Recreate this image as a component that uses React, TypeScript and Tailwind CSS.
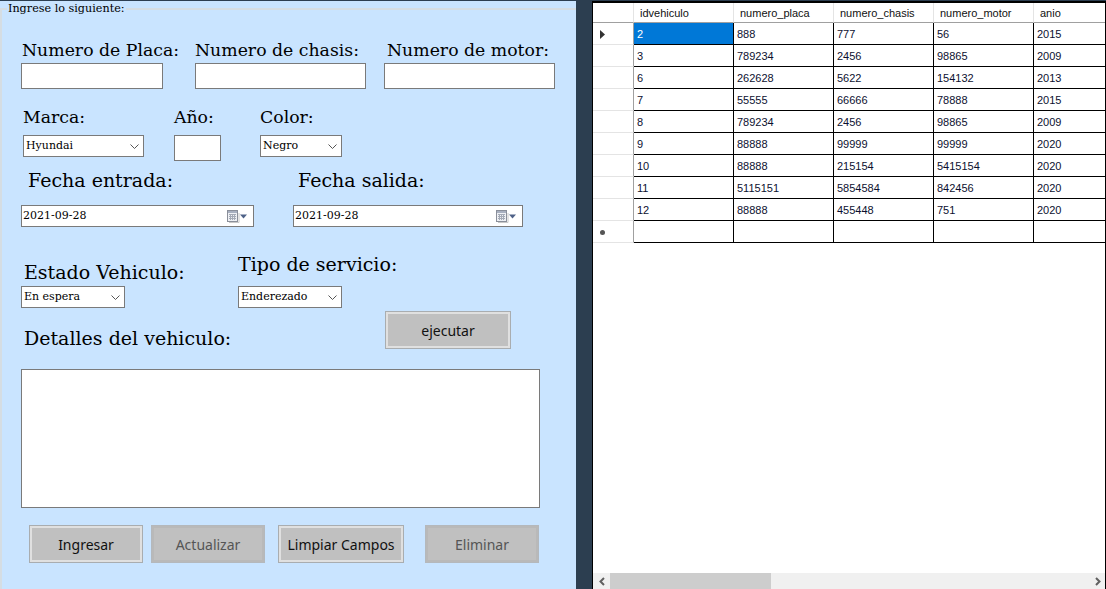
import React from "react";

const slab = "font-['DejaVu_Serif',serif]";

const rows = [
  ["2", "888", "777", "56", "2015"],
  ["3", "789234", "2456", "98865", "2009"],
  ["6", "262628", "5622", "154132", "2013"],
  ["7", "55555", "66666", "78888", "2015"],
  ["8", "789234", "2456", "98865", "2009"],
  ["9", "88888", "99999", "99999", "2020"],
  ["10", "88888", "215154", "5415154", "2020"],
  ["11", "5115151", "5854584", "842456", "2020"],
  ["12", "88888", "455448", "751", "2020"],
  ["", "", "", "", ""],
];

const headers = ["idvehiculo", "numero_placa", "numero_chasis", "numero_motor", "anio"];

const Label = ({ text, big = false, className = "" }: { text: string; big?: boolean; className?: string }) => (
  <div className={`h-5 whitespace-nowrap leading-5 text-black ${big ? "text-[19px]" : "text-[17.300px]"} ${slab} ${className}`}>{text}</div>
);

const Select = ({ value, className = "" }: { value: string; className?: string }) => (
  <div className={`flex h-[22px] items-center justify-between border border-[#7a7a7a] bg-white pl-[2px] pr-[4px] text-[11px] text-black ${slab} ${className}`}>
    <span>{value}</span>
    <svg width="9" height="5" viewBox="0 0 9 5" fill="none" stroke="#555" strokeWidth="1">
      <path d="M0.500 0.500 L4.500 4.500 L8.500 0.500" />
    </svg>
  </div>
);

const DatePicker = ({ className = "" }: { className?: string }) => (
  <div className={`flex h-[22px] items-center justify-between border border-[#7a7a7a] bg-white pl-[1px] pr-[6px] text-[11px] text-black ${slab} ${className}`}>
    <span>2021-09-28</span>
    <svg width="20" height="13" viewBox="0 0 20 13">
      <rect x="0.5" y="0.5" width="10" height="11" fill="#eef0f4" stroke="#8a8f9a" />
      <rect x="1" y="1" width="9" height="2" fill="#a8b0c0" />
      <path d="M2 4.5h7M2 6.5h7M2 8.5h7M3.5 4v6M5.5 4v6M7.5 4v6" stroke="#a4aab6" strokeWidth="1" />
      <path d="M2 12.5h10V3" fill="none" stroke="#c8c8c8" />
      <path d="M13 4.5h7l-3.500 4z" fill="#4f6288" />
    </svg>
  </div>
);

const ActionButton = ({ text, disabled = false, className = "" }: { text: string; disabled?: boolean; className?: string }) => (
  <button
    className={`h-[38px] border bg-[#c0c0c0] font-['Noto_Sans',sans-serif] text-[14px] outline-2 -outline-offset-3 ${
      disabled
        ? "border-[#b4b8bc] text-[#555] outline-[#b9b9b9]"
        : "border-[#a9adb0] text-[#111] outline-[#e0e0e0]"
    } ${className}`}
  >
    {text}
  </button>
);

export default function App() {
  return (
    <div className="flex h-[589px] w-[1106px] overflow-hidden bg-[#2c3e50] pt-px">
      {/* formulario */}
      <div className="h-full w-[576px] bg-[#c9e4ff]">
        <fieldset className="h-full border-l-2 border-t-2 border-[#d5dde3]">
          <legend className={`ml-[5px] px-[1px] text-[11.200px] leading-[15px] text-black ${slab}`}>Ingrese lo siguiente:</legend>

          <div className="pl-[19px]">
            <div className="mt-[24px] flex">
              <div className="w-[142px]">
                <Label text="Numero de Placa:" className="ml-px" />
                <input className="mt-[3px] block h-[26px] w-full border border-[#7a7a7a] bg-white" />
              </div>
              <div className="ml-[32px] w-[171px]">
                <Label text="Numero de chasis:" />
                <input className="mt-[3px] block h-[26px] w-full border border-[#7a7a7a] bg-white" />
              </div>
              <div className="ml-[18px] w-[171px]">
                <Label text="Numero de motor:" className="ml-[3px]" />
                <input className="mt-[3px] block h-[26px] w-full border border-[#7a7a7a] bg-white" />
              </div>
            </div>

            <div className="mt-[18px] flex">
              <div className="ml-[2px] w-[121px]">
                <Label text="Marca:" />
                <Select value="Hyundai" className="mt-[8px]" />
              </div>
              <div className="ml-[30px] w-[47px]">
                <Label text="Año:" />
                <input className="mt-[8px] block h-[26px] w-full border border-[#7a7a7a] bg-white" />
              </div>
              <div className="ml-[39px] w-[82px]">
                <Label text="Color:" />
                <Select value="Negro" className="mt-[8px]" />
              </div>
            </div>

            <div className="mt-[9px] flex">
              <div className="w-[233px]">
                <Label big text="Fecha entrada:" className="ml-[7px]" />
                <DatePicker className="mt-[15px]" />
              </div>
              <div className="ml-[39px] w-[230px]">
                <Label big text="Fecha salida:" className="ml-[5px]" />
                <DatePicker className="mt-[15px]" />
              </div>
            </div>

            <div className="mt-[27px] flex items-end">
              <div className="w-[104px]">
                <Label big text="Estado Vehiculo:" className="ml-[3px]" />
                <Select value="En espera" className="mt-[4px]" />
              </div>
              <div className="ml-[113px] w-[104px]">
                <Label big text="Tipo de servicio:" />
                <Select value="Enderezado" className="mt-[12px]" />
              </div>
            </div>

            <div className="mt-[3px] flex w-[490px] items-end justify-between">
              <Label big text="Detalles del vehiculo:" className="mb-px ml-[3px]" />
              <ActionButton text="ejecutar" className="w-[126px]" />
            </div>

            <textarea className="mt-[20px] block h-[139px] w-[519px] resize-none border border-[#7a7a7a] bg-white" />

            <div className="mt-[17px] ml-[8px] flex">
              <ActionButton text="Ingresar" className="w-[114px]" />
              <ActionButton text="Actualizar" disabled className="ml-[8px] w-[114px]" />
              <ActionButton text="Limpiar Campos" className="ml-[13px] w-[126px]" />
              <ActionButton text="Eliminar" disabled className="ml-[21px] w-[114px]" />
            </div>
          </div>
        </fieldset>
      </div>

      {/* tabla */}
      <div className="ml-[16px] flex h-full w-[514px] flex-col border-x border-t-2 border-black bg-white font-['Liberation_Sans',sans-serif] text-[11px]">
        <div className="min-h-0 flex-1 overflow-hidden">
          <div className="grid w-[541px] grid-cols-[41px_100px_100px_100px_100px_100px]">
            <div className="h-[20px] border-r border-b border-r-[#e4e4e4] border-b-[#a0a0a0]" />
            {headers.map((h) => (
              <div key={h} className="flex h-[20px] items-center border-r border-b border-r-[#e4e4e4] border-b-[#a0a0a0] pl-[6px] pt-px text-[#111]">
                {h}
              </div>
            ))}
            {rows.map((row, i) => (
              <React.Fragment key={i}>
                <div className="flex h-[22px] items-center border-r border-b border-r-[#a0a0a0] border-b-[#e4e4e4] pl-[6px] pt-px">
                  {i === 0 && (
                    <svg width="7" height="9" viewBox="0 0 7 9">
                      <path d="M1 0 L6 4.500 L1 9z" fill="#333" />
                    </svg>
                  )}
                  {i === rows.length - 1 && <span className="ml-[1px] block h-[5px] w-[5px] rounded-full bg-[#555]" />}
                </div>
                {row.map((cell, j) => (
                  <div
                    key={j}
                    className={`flex h-[22px] items-center border-r border-b border-black pl-[3px] pt-px ${
                      i === 0 && j === 0 ? "bg-[#0078d7] text-white" : "text-[#0c1030]"
                    }`}
                  >
                    {cell}
                  </div>
                ))}
              </React.Fragment>
            ))}
          </div>
        </div>

        {/* barra de scroll */}
        <div className="flex h-[16px] shrink-0 items-center bg-[#f0f0f0]">
          <div className="flex w-[17px] justify-center">
            <svg width="6" height="9" viewBox="0 0 6 9" fill="none" stroke="#606060" strokeWidth="2">
              <path d="M5 1 L1.500 4.500 L5 8" />
            </svg>
          </div>
          <div className="h-full w-[161px] bg-[#cdcdcd]" />
          <div className="flex flex-1 justify-end pr-[4px]">
            <svg width="6" height="9" viewBox="0 0 6 9" fill="none" stroke="#606060" strokeWidth="2">
              <path d="M1 1 L4.500 4.500 L1 8" />
            </svg>
          </div>
        </div>
      </div>
    </div>
  );
}
